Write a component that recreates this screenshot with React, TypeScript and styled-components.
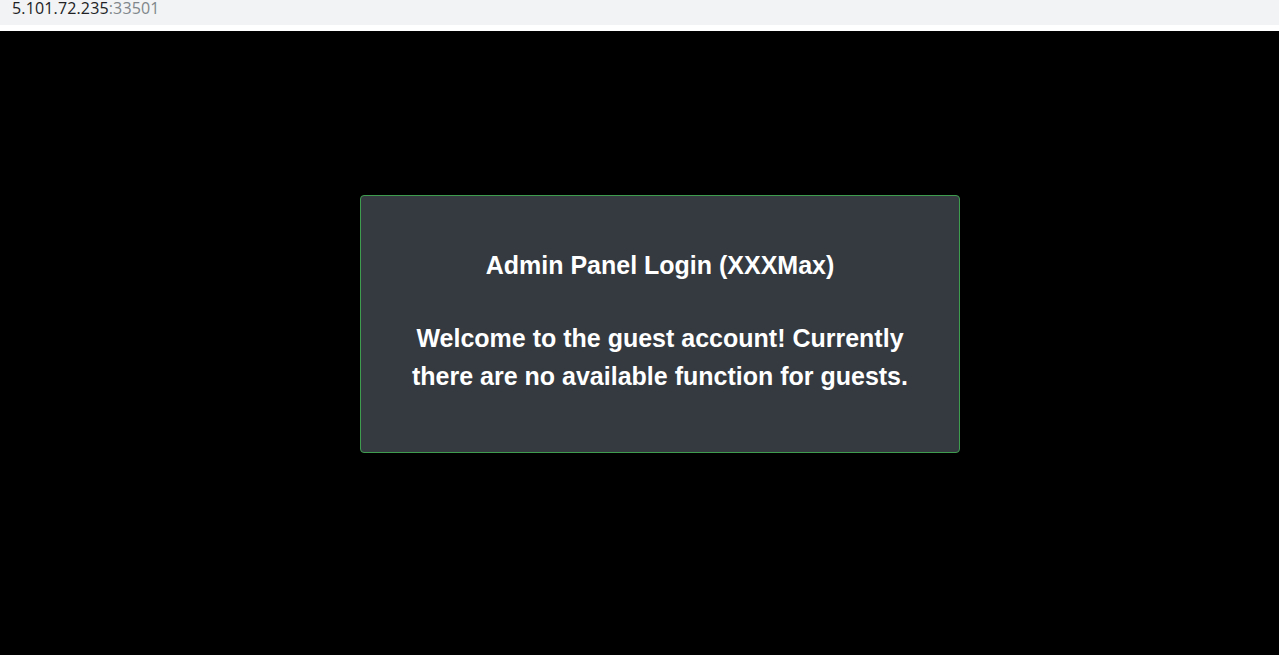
import React from 'react';
import styled, { createGlobalStyle } from 'styled-components';

const GlobalStyle = createGlobalStyle`
  html, body {
    margin: 0;
    padding: 0;
    background: #000;
    height: 100%;
  }
  #root {
    min-height: 100%;
  }
`;

const Page = styled.div`
  display: flex;
  flex-direction: column;
  min-height: 655px;
  background: #000;
`;

const AddressBar = styled.div`
  height: 31px;
  box-sizing: border-box;
  background: #f1f3f4;
  border-bottom: 6px solid #ffffff;
  padding: 2px 0 0 12px;
  font-family: 'Open Sans', 'Noto Sans', sans-serif;
  font-size: 16px;
  line-height: 12px;
  letter-spacing: 0.15px;
  color: #202124;
  white-space: nowrap;
`;

const Port = styled.span`
  color: #80868b;
`;

const Main = styled.main`
  flex: 1;
  display: flex;
  align-items: flex-start;
  padding: 164px 0 0 360px;
`;

const Card = styled.div`
  width: 600px;
  box-sizing: border-box;
  background: #343a40;
  border: 1px solid #3e9c4f;
  border-radius: 4px;
  padding: 55px 40px 57px;
  text-align: center;
  color: #ffffff;
  font-family: 'Liberation Sans', Arial, sans-serif;
  font-weight: bold;
`;

const Title = styled.h2`
  margin: 0 0 39px;
  font-size: 25px;
  line-height: 29px;
  font-weight: bold;
`;

const Message = styled.p`
  margin: 0;
  font-size: 25px;
  line-height: 38px;
`;

export default function App() {
  return (
    <Page>
      <GlobalStyle />
      <AddressBar>
        5.101.72.235<Port>:33501</Port>
      </AddressBar>
      <Main>
        <Card>
          <Title>Admin Panel Login (XXXMax)</Title>
          <Message>
            Welcome to the guest account! Currently there are no available function for guests.
          </Message>
        </Card>
      </Main>
    </Page>
  );
}
